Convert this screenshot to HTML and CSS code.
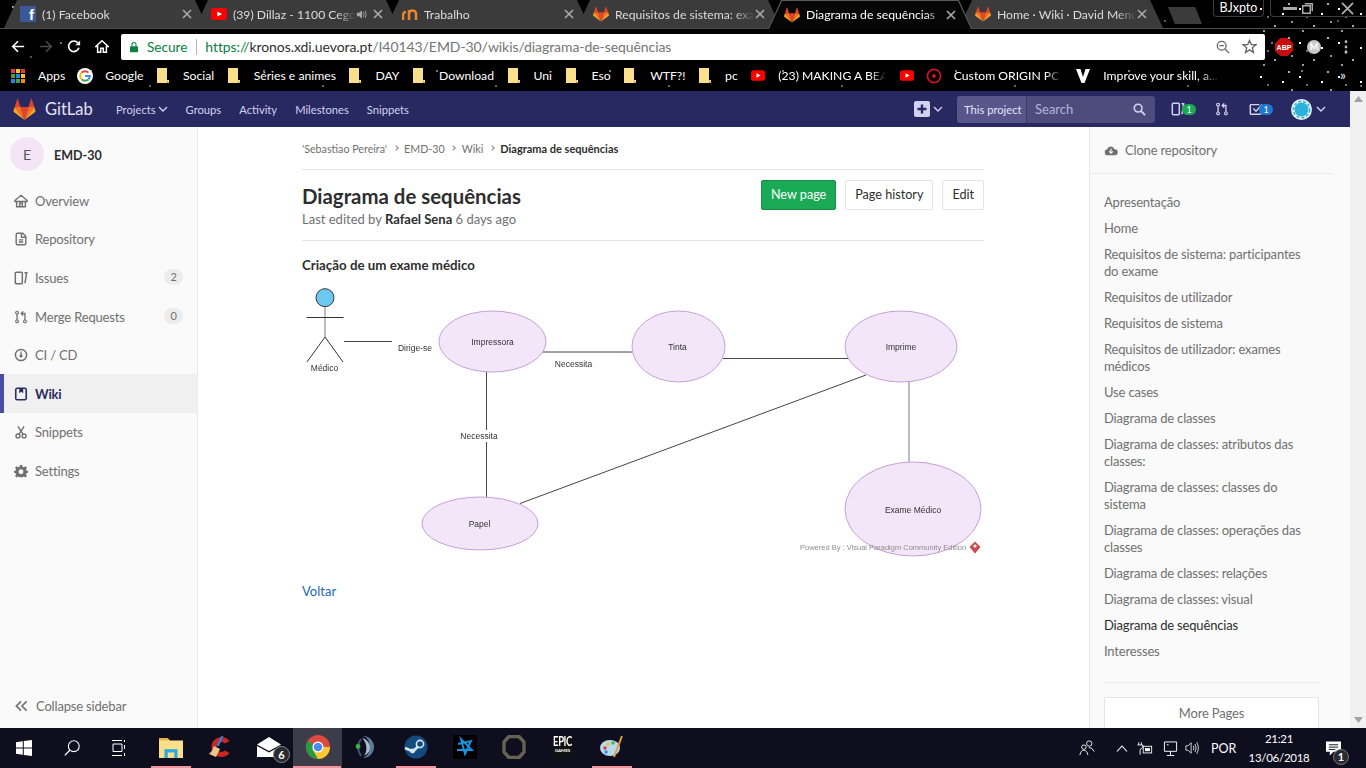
FILE: index.html
```html
<!DOCTYPE html>
<html lang="pt">
<head>
<meta charset="utf-8">
<title>Diagrama de sequências · Wiki</title>
<link rel="stylesheet" href="styles.css">
</head>
<body>
<svg class="sprites" aria-hidden="true">
  <symbol id="tanuki" viewBox="0 0 36 34">
    <path fill="#e24329" d="M18 34 24.6 13 H11.4Z"/>
    <path fill="#fc6d26" d="M18 34 11.4 13 H2.2Z"/>
    <path fill="#fca326" d="M2.2 13 .2 19.4c-.2.6 0 1.2.5 1.5L18 34Z"/>
    <path fill="#e24329" d="M2.2 13H11.4L7.4.6c-.2-.6-1-.6-1.2 0Z"/>
    <path fill="#fc6d26" d="M18 34 24.6 13H33.8Z"/>
    <path fill="#fca326" d="M33.8 13 35.8 19.4c.2.6 0 1.2-.5 1.5L18 34Z"/>
    <path fill="#e24329" d="M33.8 13H24.6L28.6.6c.2-.6 1-.6 1.2 0Z"/>
  </symbol>
  <symbol id="yt" viewBox="0 0 16 12">
    <rect width="16" height="12" rx="3" fill="#f00"/>
    <path d="M6.3 3.4 11 6 6.3 8.6Z" fill="#fff"/>
  </symbol>
  <symbol id="close" viewBox="0 0 10 10">
    <path d="M1 1 9 9M9 1 1 9" fill="none" stroke="#a8a8a8" stroke-width="1.7"/>
  </symbol>
  <symbol id="folder" viewBox="0 0 12 15">
    <path d="M0 0H10V12H12V15H0Z" fill="#fbe08c"/>
    <path d="M10 12V15H12Z" fill="#c7a949"/>
  </symbol>
  <symbol id="chev" viewBox="0 0 10 6">
    <path d="M1 1 5 5 9 1" fill="none" stroke="currentColor" stroke-width="1.4"/>
  </symbol>
  <symbol id="issues" viewBox="0 0 16 16">
    <path d="M2.5 1.5H8.5A1 1 0 0 1 9.5 2.5V13.5A1 1 0 0 1 8.5 14.5H2.5A1 1 0 0 1 1.5 13.5V2.5A1 1 0 0 1 2.5 1.5ZM12 2H14.5L12.5 14" fill="none" stroke="currentColor" stroke-width="1.7"/>
  </symbol>
  <symbol id="merge" viewBox="0 0 16 16">
    <circle cx="3.5" cy="3" r="1.6" fill="none" stroke="currentColor" stroke-width="1.3"/>
    <circle cx="3.5" cy="13" r="1.6" fill="none" stroke="currentColor" stroke-width="1.3"/>
    <circle cx="12.5" cy="13" r="1.6" fill="none" stroke="currentColor" stroke-width="1.3"/>
    <path d="M3.5 4.6V11.4M12.5 11.4V4H9M10.5 1.6 8.2 4 10.5 6.4" fill="none" stroke="currentColor" stroke-width="1.5"/>
  </symbol>
</svg>

<div class="app">
  <header class="chrome">
    <div class="tabstrip">
      <div class="tab">
        <span class="fb">f</span>
        <span class="tab-title">(1) Facebook</span>
        <svg class="tab-x"><use href="#close"/></svg>
      </div>
      <div class="tab">
        <svg class="fav"><use href="#yt"/></svg>
        <span class="tab-title">(39) Dillaz - 1100 Cegonhas</span>
        <svg class="speaker" viewBox="0 0 12 12"><path d="M1 4H3.5L6.5 1.5V10.5L3.5 8H1Z" fill="#aaa"/><path d="M8 3.5Q9.5 6 8 8.5M10 2Q12 6 10 10" fill="none" stroke="#aaa"/></svg>
        <svg class="tab-x"><use href="#close"/></svg>
      </div>
      <div class="tab">
        <svg class="fav" viewBox="0 0 16 16"><path d="M1 14V9A3 3 0 0 1 4 6" fill="none" stroke="#e8862a" stroke-width="2.6"/><path d="M7 14V4M7 8A3.5 3.5 0 0 1 14 8V14" fill="none" stroke="#e8862a" stroke-width="2.6"/></svg>
        <span class="tab-title">Trabalho</span>
        <svg class="tab-x"><use href="#close"/></svg>
      </div>
      <div class="tab">
        <svg class="fav"><use href="#tanuki"/></svg>
        <span class="tab-title">Requisitos de sistema: exames</span>
        <svg class="tab-x"><use href="#close"/></svg>
      </div>
      <div class="tab tab-active">
        <svg class="fav"><use href="#tanuki"/></svg>
        <span class="tab-title">Diagrama de sequências</span>
        <svg class="tab-x"><use href="#close"/></svg>
      </div>
      <div class="tab">
        <svg class="fav"><use href="#tanuki"/></svg>
        <span class="tab-title">Home · Wiki · David Mendes</span>
        <svg class="tab-x"><use href="#close"/></svg>
      </div>
      <div class="newtab"></div>
      <div class="winbox">
        <div class="profile">BJxpto</div>
        <div class="wincontrols">
          <svg class="wc-min" viewBox="0 0 14 3"><rect width="14" height="3" fill="#aaa"/></svg>
          <svg class="wc-max" viewBox="0 0 12 12"><path d="M3 .8H11.2V9M.8 3H9V11.2H.8Z" fill="none" stroke="#aaa" stroke-width="1.6"/></svg>
          <svg class="wc-x" viewBox="0 0 14 14"><path d="M1 1 13 13M13 1 1 13" fill="none" stroke="#aaa" stroke-width="2"/></svg>
        </div>
      </div>
    </div>

    <div class="toolbar">
      <svg class="tb-icon" viewBox="0 0 16 16"><path d="M15 8H2M8 2 2 8 8 14" fill="none" stroke="#fff" stroke-width="1.9"/></svg>
      <svg class="tb-icon" viewBox="0 0 16 16"><path d="M1 8H14M8 2 14 8 8 14" fill="none" stroke="#4a4a4a" stroke-width="1.9"/></svg>
      <svg class="tb-icon" viewBox="0 0 16 16"><path d="M13.6 9.5A6 6 0 1 1 12.4 3.8" fill="none" stroke="#fff" stroke-width="1.9"/><path d="M9.5 6.5H15V1Z" fill="#fff"/></svg>
      <svg class="tb-icon" viewBox="0 0 16 16"><path d="M8 1.5 15 8H13V14.5H9.5V10H6.5V14.5H3V8H1Z" fill="none" stroke="#fff" stroke-width="1.7"/></svg>
      <div class="omnibox">
        <svg class="lock" viewBox="0 0 10 13"><path d="M2.5 6V3.5A2.5 2.5 0 0 1 7.5 3.5V6" fill="none" stroke="#0b8043" stroke-width="1.3"/><rect y="5.5" width="10" height="7.5" rx="1" fill="#0b8043"/></svg>
        <span class="secure">Secure</span>
        <span class="omni-sep"></span>
        <span class="url"><span class="url-scheme">https://</span><span class="url-host">kronos.xdi.uevora.pt</span>/I40143/EMD-30/wikis/diagrama-de-sequências</span>
        <svg class="omni-zoom" viewBox="0 0 16 16"><circle cx="6.5" cy="6.5" r="5" fill="none" stroke="#666" stroke-width="1.5"/><path d="M10.3 10.3 15 15M4 6.5H9" fill="none" stroke="#666" stroke-width="1.5"/></svg>
        <svg class="omni-star" viewBox="0 0 16 16"><path d="M8 1.5 9.9 6H14.9L11 9.2 12.3 14.4 8 11.6 3.7 14.4 5 9.2 1.1 6H6.1Z" fill="none" stroke="#666" stroke-width="1.4"/></svg>
      </div>
      <svg class="ext-abp" viewBox="0 0 18 18"><path d="M5.3 0H12.7L18 5.3V12.7L12.7 18H5.3L0 12.7V5.3Z" fill="#c70d0d"/><text x="9" y="12" text-anchor="middle" class="abp-text">ABP</text></svg>
      <span class="ext-m">M</span>
      <svg class="menu-dots" viewBox="0 0 4 16"><circle cx="2" cy="2" r="1.6" fill="#bbb"/><circle cx="2" cy="8" r="1.6" fill="#bbb"/><circle cx="2" cy="14" r="1.6" fill="#bbb"/></svg>
    </div>

    <nav class="bookmarks">
      <a class="bm bm-first"><svg class="bm-apps" viewBox="0 0 14 14"><rect width="4" height="4" fill="#e53935"/><rect x="5" width="4" height="4" fill="#fbc02d"/><rect x="10" width="4" height="4" fill="#e53935"/><rect y="5" width="4" height="4" fill="#43a047"/><rect x="5" y="5" width="4" height="4" fill="#1e88e5"/><rect x="10" y="5" width="4" height="4" fill="#fbc02d"/><rect y="10" width="4" height="4" fill="#1e88e5"/><rect x="5" y="10" width="4" height="4" fill="#43a047"/><rect x="10" y="10" width="4" height="4" fill="#fb8c00"/></svg>Apps</a>
      <a class="bm"><svg class="bm-g" viewBox="0 0 16 16"><circle cx="8" cy="8" r="8" fill="#fff"/><path d="M8 3.2A4.8 4.8 0 0 1 11.4 4.6" fill="none" stroke="#ea4335" stroke-width="2"/><path d="M4.6 4.6A4.8 4.8 0 0 1 8 3.2" fill="none" stroke="#ea4335" stroke-width="2"/><path d="M4.6 4.6A4.8 4.8 0 0 0 4.6 11.4" fill="none" stroke="#fbbc05" stroke-width="2"/><path d="M4.6 11.4A4.8 4.8 0 0 0 11.4 11.4" fill="none" stroke="#34a853" stroke-width="2"/><path d="M11.4 11.4A4.8 4.8 0 0 0 12.8 8H8" fill="none" stroke="#4285f4" stroke-width="2"/></svg>Google</a>
      <a class="bm"><svg class="bm-f"><use href="#folder"/></svg>Social</a>
      <a class="bm"><svg class="bm-f"><use href="#folder"/></svg>Séries e animes</a>
      <a class="bm"><svg class="bm-f"><use href="#folder"/></svg>DAY</a>
      <a class="bm"><svg class="bm-f"><use href="#folder"/></svg>Download</a>
      <a class="bm"><svg class="bm-f"><use href="#folder"/></svg>Uni</a>
      <a class="bm"><svg class="bm-f"><use href="#folder"/></svg>Eso</a>
      <a class="bm"><svg class="bm-f"><use href="#folder"/></svg>WTF?!</a>
      <a class="bm"><svg class="bm-f"><use href="#folder"/></svg>pc</a>
      <a class="bm"><svg class="bm-y"><use href="#yt"/></svg><span class="bm-cut">(23) MAKING A BEAT</span></a>
      <a class="bm bm-tight"><svg class="bm-y"><use href="#yt"/></svg></a>
      <a class="bm"><svg class="bm-g" viewBox="0 0 16 16"><circle cx="8" cy="8" r="6.6" fill="none" stroke="#c8161d" stroke-width="1.8"/><circle cx="8" cy="8" r="2" fill="#c8161d"/></svg><span class="bm-cut">Custom ORIGIN PC E</span></a>
      <a class="bm"><svg class="bm-g" viewBox="0 0 16 16"><path d="M1 1H5.5L8 9 10.5 1H15L9.5 15H6.5Z" fill="#fff"/></svg><span class="bm-cut bm-improve">Improve your skill, a...</span></a>
      <span class="bm-more">»</span>
    </nav>
  </header>

  <div class="viewport">
    <div class="page">
      <div class="navbar">
        <div class="brand"><svg class="brand-logo"><use href="#tanuki"/></svg><span>GitLab</span></div>
        <ul class="navlinks">
          <li>Projects <svg class="chev"><use href="#chev"/></svg></li>
          <li>Groups</li>
          <li>Activity</li>
          <li>Milestones</li>
          <li>Snippets</li>
        </ul>
        <div class="nav-right">
          <div class="plus">
            <svg class="plus-box" viewBox="0 0 16 16"><rect width="16" height="16" rx="2" fill="#d1d1f0"/><path d="M8 3.5V12.5M3.5 8H12.5" stroke="#292961" stroke-width="2.4"/></svg>
            <svg class="chev"><use href="#chev"/></svg>
          </div>
          <div class="search">
            <span class="search-scope">This project</span>
            <span class="search-box">Search
              <svg class="search-ico" viewBox="0 0 14 14"><circle cx="5.5" cy="5.5" r="4.2" fill="none" stroke="#d1d1f0" stroke-width="1.7"/><path d="M8.8 8.8 13 13" stroke="#d1d1f0" stroke-width="2"/></svg>
            </span>
          </div>
          <div class="nav-ico nav-issues"><svg class="nav-svg"><use href="#issues"/></svg><span class="nav-badge nav-green">1</span></div>
          <div class="nav-ico nav-merge"><svg class="nav-svg"><use href="#merge"/></svg></div>
          <div class="nav-ico nav-todo">
            <svg class="nav-svg" viewBox="0 0 16 16"><path d="M12 3H2.5A1 1 0 0 0 1.5 4V13A1 1 0 0 0 2.5 14H12.5A1 1 0 0 0 13.5 13V9M5 7.5 8 10.5 15 3" fill="none" stroke="currentColor" stroke-width="1.7"/></svg>
            <span class="nav-badge nav-blue">1</span>
          </div>
          <div class="nav-avatar">
            <svg class="avatar-svg" viewBox="0 0 21 21"><circle cx="10.5" cy="10.5" r="10.5" fill="#e4f3f8"/><circle cx="10.5" cy="10.5" r="7" fill="#2cb1d9"/><circle cx="10.5" cy="10.5" r="8.200" fill="none" stroke="#2cb1d9" stroke-width="1.400" stroke-dasharray="3 2"/></svg>
            <svg class="chev"><use href="#chev"/></svg>
          </div>
        </div>
      </div>

      <div class="body">
        <aside class="sidebar">
          <div class="project">
            <span class="project-avatar">E</span>
            <span class="project-name">EMD-30</span>
          </div>
          <ul class="side-nav">
            <li class="side-item"><svg class="side-ico" viewBox="0 0 16 16"><path d="M8 1.5 15 7.5V8.5H13V14.5H3V8.5H1V7.5ZM3.5 8.5H12.5M6.5 14V10.5H9.5V14" fill="none" stroke="currentColor" stroke-width="1.6"/></svg>Overview</li>
            <li class="side-item"><svg class="side-ico" viewBox="0 0 16 16"><path d="M4 1.5H10L13.5 5V13A1.5 1.5 0 0 1 12 14.5H4A1.5 1.5 0 0 1 2.5 13V3A1.5 1.5 0 0 1 4 1.5ZM8.5 2V6H13M5.5 9H10.5M5.5 11.5H10.5" fill="none" stroke="currentColor" stroke-width="1.6"/></svg>Repository</li>
            <li class="side-item"><svg class="side-ico"><use href="#issues"/></svg>Issues<span class="side-badge">2</span></li>
            <li class="side-item"><svg class="side-ico"><use href="#merge"/></svg>Merge Requests<span class="side-badge">0</span></li>
            <li class="side-item"><svg class="side-ico" viewBox="0 0 16 16"><circle cx="8" cy="8" r="6.4" fill="none" stroke="currentColor" stroke-width="1.7"/><circle cx="8" cy="9" r="1.8" fill="currentColor"/><path d="M8 4V8" stroke="currentColor" stroke-width="1.4"/></svg>CI / CD</li>
            <li class="side-item side-active"><svg class="side-ico" viewBox="0 0 16 16"><path d="M3.5 1.5H12.5A1.5 1.5 0 0 1 14 3V13A1.5 1.5 0 0 1 12.5 14.5H3.5A1.5 1.5 0 0 1 2 13V3A1.5 1.5 0 0 1 3.5 1.5Z" fill="none" stroke="currentColor" stroke-width="1.8"/><path d="M6 2H10.5V7L8.2 5.5 6 7Z" fill="currentColor"/></svg>Wiki</li>
            <li class="side-item"><svg class="side-ico" viewBox="0 0 16 16"><circle cx="4.5" cy="12.5" r="2.2" fill="none" stroke="currentColor" stroke-width="1.6"/><circle cx="11.5" cy="12.5" r="2.2" fill="none" stroke="currentColor" stroke-width="1.6"/><path d="M10.4 10.6 4.5 1.5M5.6 10.6 11.5 1.5" fill="none" stroke="currentColor" stroke-width="1.6"/></svg>Snippets</li>
            <li class="side-item"><svg class="side-ico" viewBox="0 0 16 16"><path d="M6.7 1H9.3L9.7 3 11.3 3.7 13 2.6 14.8 4.4 13.7 6.1 14.4 7.7 16 8V10L14.4 10.3 13.7 11.9 14.8 13.6 13 15.4 11.3 14.3 9.7 15H6.3L4.7 14.3 3 15.4 1.2 13.6 2.3 11.9 1.6 10.3 0 10V8L1.6 7.7 2.3 6.1 1.2 4.4 3 2.6 4.7 3.7 6.3 3ZM8 6A2.6 2.6 0 1 0 8 11.6 2.6 2.6 0 1 0 8 6Z" fill="currentColor" fill-rule="evenodd"/></svg>Settings</li>
          </ul>
          <div class="collapse">
            <svg class="collapse-ico" viewBox="0 0 14 12"><path d="M6.5 1 1.5 6 6.5 11M12.5 1 7.5 6 12.5 11" fill="none" stroke="currentColor" stroke-width="1.8"/></svg>
            Collapse sidebar
          </div>
        </aside>

        <main class="content">
          <div class="container">
            <ol class="crumbs">
              <li>'Sebastiao Pereira'</li>
              <li class="crumb-sep"></li>
              <li>EMD-30</li>
              <li class="crumb-sep"></li>
              <li>Wiki</li>
              <li class="crumb-sep"></li>
              <li class="crumb-last">Diagrama de sequências</li>
            </ol>
            <div class="page-head">
              <div>
                <h1 class="page-title">Diagrama de sequências</h1>
                <p class="page-meta">Last edited by <strong>Rafael Sena</strong> 6 days ago</p>
              </div>
              <div class="page-actions">
                <a class="btn btn-new">New page</a>
                <a class="btn">Page history</a>
                <a class="btn">Edit</a>
              </div>
            </div>
            <h2 class="wiki-heading">Criação de um exame médico</h2>
            <svg class="diagram" viewBox="302 285 682 276">
              <g class="d-line">
                <path d="M344 341.5H392"/>
                <path d="M543 352H632"/>
                <path d="M486.5 372V430M486.5 442V497"/>
                <path d="M520 503.5 866 375"/>
                <path d="M723 358.5H848"/>
              </g>
              <path class="d-line-grey" d="M909 382V462"/>
              <ellipse class="d-oval" cx="492.5" cy="341.5" rx="53.5" ry="30.5"/>
              <ellipse class="d-oval" cx="678.5" cy="346.5" rx="46.5" ry="35.5"/>
              <ellipse class="d-oval" cx="901" cy="346.5" rx="56" ry="35.5"/>
              <ellipse class="d-oval" cx="913" cy="509" rx="68" ry="47"/>
              <ellipse class="d-oval" cx="480" cy="523.5" rx="58" ry="26.5"/>
              <circle class="d-head" cx="325" cy="297.7" r="9"/>
              <path class="d-line-grey" d="M325 307V337"/>
              <path class="d-actor" d="M306.5 317.5H343.5M325 337 307 362M325 337 343 362"/>
              <text class="d-text" x="324.5" y="371" text-anchor="middle">Médico</text>
              <text class="d-text" x="415" y="351" text-anchor="middle">Dirige-se</text>
              <text class="d-text" x="492.5" y="344.5" text-anchor="middle">Impressora</text>
              <text class="d-text" x="573.5" y="367" text-anchor="middle">Necessita</text>
              <text class="d-text" x="479" y="439" text-anchor="middle">Necessita</text>
              <text class="d-text" x="677.5" y="349.5" text-anchor="middle">Tinta</text>
              <text class="d-text" x="901" y="349.5" text-anchor="middle">Imprime</text>
              <text class="d-text" x="913" y="512.5" text-anchor="middle">Exame Médico</text>
              <text class="d-text" x="479.5" y="527" text-anchor="middle">Papel</text>
              <text class="d-powered" x="800" y="550">Powered By : Visual Paradigm Community Edition</text>
              <path class="d-logo" d="M975 541.5 980.5 547 975 553.5 969.500 547Z"/>
              <circle class="d-logo-dot" cx="975" cy="546" r="1.600"/>
            </svg>
            <a class="back-link">Voltar</a>
          </div>
        </main>

        <aside class="wiki-side">
          <div class="clone">
            <svg class="clone-ico" viewBox="0 0 16 12"><path d="M4 11.500A3.500 3.500 0 0 1 3.500 4.600 4.500 4.500 0 0 1 12 4.500 3.500 3.500 0 0 1 12.500 11.500Z" fill="#707070"/><path d="M8 4V9M5.800 7 8 9.200 10.200 7" fill="none" stroke="#fafafa" stroke-width="1.300"/></svg>
            Clone repository
          </div>
          <ul class="wiki-pages">
            <li>Apresentação</li>
            <li>Home</li>
            <li>Requisitos de sistema: participantes do exame</li>
            <li>Requisitos de utilizador</li>
            <li>Requisitos de sistema</li>
            <li>Requisitos de utilizador: exames médicos</li>
            <li>Use cases</li>
            <li>Diagrama de classes</li>
            <li>Diagrama de classes: atributos das classes:</li>
            <li>Diagrama de classes: classes do sistema</li>
            <li>Diagrama de classes: operações das classes</li>
            <li>Diagrama de classes: relações</li>
            <li>Diagrama de classes: visual</li>
            <li class="wiki-current">Diagrama de sequências</li>
            <li>Interesses</li>
          </ul>
          <div class="more-pages"><a class="more-btn">More Pages</a></div>
        </aside>
      </div>
    </div>
    <div class="scrollbar">
      <svg class="sb-arrow" viewBox="0 0 9 6"><path d="M4.500 0 9 6H0Z" fill="#a3a3a3"/></svg>
      <svg class="sb-arrow" viewBox="0 0 9 6"><path d="M4.500 6 9 0H0Z" fill="#a3a3a3"/></svg>
    </div>
  </div>

  <footer class="taskbar">
    <div class="tk-sys">
      <svg class="tk-win" viewBox="0 0 16 16"><path d="M0 2.300 6.800 1.300V7.500H0ZM7.800 1.100 16 0V7.500H7.800ZM0 8.500H6.800V14.700L0 13.700ZM7.800 8.500H16V16L7.800 14.900Z" fill="#fff"/></svg>
    </div>
    <div class="tk-sys">
      <svg class="tk-ico" viewBox="0 0 16 16"><circle cx="9.800" cy="6.200" r="5.400" fill="none" stroke="#fff" stroke-width="1.100"/><path d="M6 10 .8 15.400" stroke="#fff" stroke-width="1.300"/></svg>
    </div>
    <div class="tk-sys">
      <svg class="tk-ico" viewBox="0 0 16 16"><path d="M0 .5H10M0 15.500H10M1 4H10V11.500H1ZM12.500 0V2M12.500 5V9M12.500 13V16" fill="none" stroke="#fff"/></svg>
    </div>
    <div class="tk-app tk-open tk-first">
      <svg class="tk-app-ico" viewBox="0 0 22 20"><path d="M0 2H8L10 4H22V20H0Z" fill="#fbdf8a"/><path d="M0 2H8L10 4H0Z" fill="#e8b93e"/><rect x="5" y="12" width="12" height="8" fill="#2da9df"/><path d="M8 20V15H14V20Z" fill="#fbdf8a"/></svg>
    </div>
    <div class="tk-app">
      <svg class="tk-app-ico" viewBox="0 0 24 24"><path d="M21.500 6A10 10 0 1 0 21.500 18L17 15.500A5 5 0 1 1 17 8.500Z" fill="#c9281e"/><path d="M14.500 1 9.500 11" stroke="#2f7fd0" stroke-width="2.400"/><path d="M6 11 12 14 8 22 1 19Q4.500 16 6 11Z" fill="#e8c48a"/></svg>
    </div>
    <div class="tk-app tk-mail">
      <svg class="tk-app-ico" viewBox="0 0 24 20"><path d="M0 7.500 12 0 24 7.500 12 14Z" fill="#fff"/><path d="M0 9 12 15.500 24 9V20H0Z" fill="#fff"/></svg>
      <span class="mail-badge">6</span>
    </div>
    <div class="tk-app tk-current">
      <svg class="tk-app-ico tk-chrome" viewBox="0 0 24 24"><circle cx="12" cy="12" r="12" fill="#dd4b3e"/><path d="M12 12 1.600 6A12 12 0 0 0 12 24L18 13.600Z" fill="#279a43"/><path d="M12 12H24A12 12 0 0 1 12 24L6 13.600Z" fill="#fcc934"/><circle cx="12" cy="12" r="5.500" fill="#fff"/><circle cx="12" cy="12" r="4.300" fill="#4c8bf5"/></svg>
    </div>
    <div class="tk-app">
      <svg class="tk-app-ico" viewBox="0 0 24 24"><path d="M8 1A11 11 0 0 1 8 23 9 9 0 0 0 14 12 9 9 0 0 0 8 1Z" fill="#5b7c99"/><path d="M7 3A10 10 0 0 1 15 12 10 10 0 0 1 9 21 14 14 0 0 0 7 3Z" fill="#a9bccd"/><path d="M6 4Q0 12 6 21" fill="none" stroke="#3d566d" stroke-width="2"/><circle cx="3" cy="11.500" r="2.400" fill="#3fae49"/></svg>
    </div>
    <div class="tk-app tk-open">
      <svg class="tk-app-ico" viewBox="0 0 24 24"><circle cx="12" cy="12" r="11.500" fill="#134a7d"/><circle cx="16" cy="9" r="3.600" fill="none" stroke="#d6e6f2" stroke-width="1.600"/><path d="M1 13 9 16.500 14 11.500" fill="none" stroke="#d6e6f2" stroke-width="2.600"/><circle cx="8.500" cy="16" r="2.400" fill="#d6e6f2"/></svg>
    </div>
    <div class="tk-app">
      <svg class="tk-app-ico" viewBox="0 0 24 24"><rect width="24" height="24" rx="1.500" fill="#000"/><path d="M5 9 18 6 12 19 8 4 19 15 4 15" fill="none" stroke="#1596e2" stroke-width="1.800"/></svg>
    </div>
    <div class="tk-app">
      <svg class="tk-app-ico" viewBox="0 0 24 24"><path d="M7 1.500H17L22 7V17L17 22.500H7L2 17V7Z" fill="none" stroke="#686250" stroke-width="3.400" stroke-linejoin="round"/></svg>
    </div>
    <div class="tk-app">
      <div class="epic"><span>EPIC</span><small>GAMES</small></div>
    </div>
    <div class="tk-app tk-open">
      <svg class="tk-app-ico" viewBox="0 0 24 24"><ellipse cx="10" cy="13" rx="10" ry="8" fill="#b9d9ee"/><circle cx="5" cy="13" r="1.800" fill="#e0433b"/><circle cx="8" cy="9" r="1.800" fill="#f2c230"/><circle cx="13" cy="8" r="1.800" fill="#54b04a"/><circle cx="6" cy="17" r="1.800" fill="#3f8fd6"/><path d="M22 1 14 22" stroke="#e59b3c" stroke-width="2"/></svg>
    </div>
    <div class="tray">
      <svg class="tr-people" viewBox="0 0 18 18"><circle cx="11.500" cy="4" r="3" fill="none" stroke="#fff"/><circle cx="5.500" cy="8" r="2.500" fill="none" stroke="#fff"/><path d="M1 17Q2 11.500 5.500 11.500T10 17M11 8.500Q15 8 17 13" fill="none" stroke="#fff"/></svg>
      <svg class="tr-caret" viewBox="0 0 12 7"><path d="M1 6.500 6 1 11 6.500" fill="none" stroke="#fff" stroke-width="1.100"/></svg>
      <svg class="tr-power" viewBox="0 0 18 14"><path d="M2 0V3M5 0V3M.5 3H6.500V6L3.500 8V14" fill="none" stroke="#fff"/><rect x="7" y="4.500" width="9.500" height="7.500" fill="none" stroke="#fff"/><rect x="9" y="6.500" width="5.500" height="3.500" fill="#fff"/></svg>
      <svg class="tr-net" viewBox="0 0 16 16"><path d="M1.500 1H14.500V11H1.500ZM8 11V15M4 15.500H12M4 4H6" fill="none" stroke="#fff"/></svg>
      <svg class="tr-vol" viewBox="0 0 16 16"><path d="M1 5.500H3.500L7 2V14L3.500 10.500H1ZM9.500 5.500Q11 8 9.500 10.500M11.500 3.500Q14 8 11.500 12.500M13.500 1.500Q17 8 13.500 14.500" fill="none" stroke="#fff" stroke-width=".9"/></svg>
      <span class="tr-lang">POR</span>
      <div class="tr-clock"><span>21:21</span><span>13/06/2018</span></div>
      <div class="tr-note">
        <svg class="tr-note-ico" viewBox="0 0 16 15"><path d="M0 0H16V11H8L4 15V11H0Z" fill="#fff"/><path d="M3 3.500H13M3 6H13M3 8.500H10" stroke="#101020"/></svg>
        <span class="note-badge">1</span>
      </div>
    </div>
  </footer>
</div>
</body>
</html>
```

FILE: styles.css
```css
* { box-sizing: border-box; }
html, body { margin: 0; height: 100%; overflow: hidden; }
body { font-family: Lato, "Open Sans", "Liberation Sans", sans-serif; font-size: 13px; color: #2e2e2e; background: #fff; }
ul, ol { list-style: none; margin: 0; padding: 0; }
h1, h2, p { margin: 0; }
svg { display: block; flex: none; }
.sprites { position: absolute; width: 0; height: 0; }
.app { display: flex; flex-direction: column; width: 1366px; height: 768px; overflow: hidden; }

/* browser chrome */
.chrome {
  position: relative; flex: none; height: 91px; background-color: #000; color: #fff;
  font-size: 12px;
  background-image:
    radial-gradient(circle at 13px 7px, #fff .5px, transparent 1.1px),
    radial-gradient(circle at 61px 43px, #aac .5px, transparent 1.1px),
    radial-gradient(circle at 127px 21px, #889 .5px, transparent 1.1px),
    radial-gradient(circle at 91px 71px, #fff .4px, transparent 1px),
    radial-gradient(circle at 31px 57px, #779 .5px, transparent 1.1px),
    radial-gradient(circle at 150px 86px, #ccd .4px, transparent 1px);
  background-size: 173px 91px;
}
.chrome::before {
  content: ""; position: absolute; top: 0; right: 0; bottom: 0; width: 110px;
  background-image:
    radial-gradient(circle at 5px 9px, #fff .7px, transparent 1.2px),
    radial-gradient(circle at 19px 26px, #fff .5px, transparent 1.1px),
    radial-gradient(circle at 33px 4px, #ddd .6px, transparent 1.1px),
    radial-gradient(circle at 12px 17px, #bbb .5px, transparent 1px),
    radial-gradient(circle at 27px 14px, #fff .7px, transparent 1.2px),
    radial-gradient(circle at 8px 31px, #eee .5px, transparent 1.1px),
    radial-gradient(circle at 36px 22px, #fff .5px, transparent 1px);
  background-size: 39px 34px;
}
.tabstrip { position: relative; display: flex; height: 29px; padding-left: 4px; border-bottom: 1px solid #4b4b4b; }
.tab {
  position: relative; display: flex; align-items: center; width: 205px; height: 28px; margin-right: -14px; padding: 0 16px;
  background: #3b3b3b; color: #dcdcdc; font-size: 12.2px;
  clip-path: polygon(0 100%, 13px 0, 191px 0, 204px 100%);
}
.tab-active { background: #5a5a5a; color: #fff; height: 29px; z-index: 1; }
.tab-active::before {
  content: ""; position: absolute; inset: 1px 0 0 0; background: #060606;
  clip-path: polygon(1px 100%, 14px 0, 190px 0, 203px 100%);
}
.tab > * { position: relative; }
.fav { width: 16px; height: 16px; }
.fb { display: block; width: 16px; height: 16px; flex: none; background: #3b5998; color: #fff; font: 700 15px/17px "Liberation Sans", sans-serif; text-align: right; padding-right: 2px; }
.tab-title { flex: 1; margin-left: 6px; overflow: hidden; white-space: nowrap; -webkit-mask-image: linear-gradient(90deg, #000 85%, transparent); mask-image: linear-gradient(90deg, #000 85%, transparent); }
.tab-x { width: 10px; height: 10px; margin-right: 1px; }
.speaker { width: 11px; height: 11px; margin-right: 6px; }
.newtab { position: relative; width: 34px; height: 17px; margin: 7px 0 0 18px; background: #3b3b3b; clip-path: polygon(0 0, 80% 0, 100% 100%, 20% 100%); }
.winbox { position: absolute; top: 0; right: 0; display: flex; gap: 6px; height: 17px; }
.profile { width: 51px; text-align: center; border: 1px solid #3c3c3c; border-top: 0; border-radius: 0 0 4px 4px; line-height: 16px; font-size: 12.500px; }
.wincontrols { display: flex; align-items: center; width: 96px; padding: 0 0 0 12px; border: 1px solid #3c3c3c; border-top: 0; border-right: 0; border-radius: 0 0 0 4px; }
.wc-min { width: 14px; height: 3px; }
.wc-max { width: 11px; height: 11px; margin-left: 5px; }
.wc-x { width: 13px; height: 13px; margin-left: 28px; }

.toolbar { position: relative; display: flex; align-items: center; height: 32px; padding: 3px 0 0 11px; }
.tb-icon { width: 14px; height: 15px; margin-right: 14px; }
.omnibox { display: flex; align-items: center; width: 1144px; height: 26px; margin-left: -2px; padding: 0 8px 0 9px; background: #fff; border-radius: 2px; color: #757575; font-size: 14px; letter-spacing: -.07px; }
.lock { width: 8px; height: 12px; }
.secure { margin-left: 9px; color: #0b8043; font-size: 13.700px; }
.omni-sep { width: 1px; height: 16px; margin: 0 8px 0 9px; background: #b5b5b5; }
.url { flex: 1; white-space: nowrap; }
.url-scheme { color: #0b8043; }
.url-host { color: #303030; }
.omni-zoom { width: 14px; height: 14px; margin-right: 12px; }
.omni-star { width: 15px; height: 15px; }
.ext-abp { width: 18px; height: 18px; margin-left: 10px; }
.abp-text { font: 700 7px "Liberation Sans", sans-serif; fill: #fff; letter-spacing: 0; }
.ext-m { display: flex; align-items: center; justify-content: center; width: 14px; height: 14px; margin-left: 14px; border-radius: 50%; background: #c8c8c8; color: #fff; font-size: 9px; font-weight: 700; }
.menu-dots { width: 4px; height: 14px; margin-left: 23px; }

.bookmarks { position: relative; display: flex; align-items: center; height: 29px; padding-left: 11px; white-space: nowrap; font-size: 12.200px; }
.bm { display: flex; align-items: center; gap: 14px; margin-right: 13.500px; }
.bm-first { gap: 13px; margin-right: 12px; }
.bm-tight { margin-right: 13px; }
.bm-apps { width: 14px; height: 14px; }
.bm-g { width: 16px; height: 16px; margin-right: -2px; }
.bm-f { width: 12px; height: 15px; }
.bm-y { width: 14px; height: 11px; margin-right: -1px; }
.bm-cut { display: block; width: 108px; overflow: hidden; -webkit-mask-image: linear-gradient(90deg, #000 85%, transparent); mask-image: linear-gradient(90deg, #000 85%, transparent); }
.bm-improve { width: 116px; }
.bm-more { position: absolute; right: 20px; top: 6px; font-size: 13px; font-weight: 700; color: #ccc; }

/* page */
.viewport { display: flex; flex: 1; min-height: 0; }
.page { display: flex; flex-direction: column; flex: 1; min-width: 0; }
.navbar { display: flex; align-items: center; flex: none; height: 36px; padding-left: 13px; background: #292961; color: #d1d1f0; font-size: 11.200px; }
.brand { display: flex; align-items: center; gap: 9px; width: 103px; color: #e3e3f5; font-size: 16.500px; }
.brand-logo { width: 23px; height: 21px; }
.navlinks { display: flex; gap: 18px; }
.navlinks li { display: flex; align-items: center; gap: 2px; }
.chev { width: 10px; height: 6px; color: #d1d1f0; }
.nav-right { display: flex; align-items: center; margin-left: auto; }
.plus { display: flex; align-items: center; gap: 3px; margin-right: 14px; }
.plus-box { width: 16px; height: 16px; }
.search { display: flex; width: 198px; height: 27px; margin-right: 16px; border-radius: 3px; overflow: hidden; background: #4c4c7d; }
.search-scope { display: flex; align-items: center; width: 70px; padding-left: 7px; background: #56568a; border-right: 1px solid #3b3b70; color: #e4e4f6; font-size: 11.200px; white-space: nowrap; }
.search-box { display: flex; align-items: center; justify-content: space-between; flex: 1; padding: 0 9px 0 8px; color: #b4b4d8; font-size: 13px; }
.search-ico { width: 13px; height: 13px; }
.nav-ico { position: relative; display: flex; align-items: center; height: 20px; }
.nav-issues { width: 25px; margin-right: 19px; }
.nav-merge { width: 13px; margin-right: 21px; }
.nav-todo { width: 24px; margin-right: 18px; }
.nav-svg { width: 14px; height: 16px; color: #d1d1f0; }
.nav-badge { position: absolute; right: 0; top: 5px; display: block; width: 14px; height: 11px; border-radius: 6px; color: #fff; font-size: 9px; line-height: 11px; text-align: center; }
.nav-green { background: #1aaa55; }
.nav-blue { background: #1f78d1; }
.nav-avatar { display: flex; align-items: center; gap: 4px; margin-right: 24px; }
.avatar-svg { width: 21px; height: 21px; }

.body { display: flex; flex: 1; min-height: 0; }
.sidebar { display: flex; flex-direction: column; flex: none; width: 198px; background: #fafafa; border-right: 1px solid #e9e9e9; color: #707070; letter-spacing: -.17px; }
.project { display: flex; align-items: center; gap: 10px; height: 34px; margin: 10px 0; padding-left: 10px; }
.project-avatar { display: flex; align-items: center; justify-content: center; width: 34px; height: 34px; border-radius: 50%; background: #f3e5f5; color: #555; font-size: 14px; }
.project-name { padding-top: 3px; color: #2e2e2e; font-size: 12.500px; font-weight: 700; letter-spacing: 0; }
.side-item { position: relative; display: flex; align-items: center; height: 38.600px; padding: 1px 14px 0 14px; }
.side-ico { width: 14px; height: 14px; margin-right: 7px; }
.side-badge { margin-left: auto; width: 19px; height: 16px; margin-top: -2px; border-radius: 8px; background: #ececec; color: #707070; font-size: 11px; line-height: 16px; text-align: center; }
.side-active { background: #f0f0f0; color: #292961; font-weight: 700; box-shadow: inset 4px 0 0 #4b4ba3; }
.collapse { display: flex; align-items: center; gap: 8px; margin-top: auto; height: 44px; padding-left: 15px; }
.collapse-ico { width: 13px; height: 12px; }

.content { flex: 1; min-width: 0; padding-right: 1px; background: #fff; }
.container { width: 682px; margin: 0 auto; }
.crumbs { display: flex; align-items: center; gap: 7.500px; height: 43px; border-bottom: 1px solid #e5e5e5; color: #707070; font-size: 10.700px; }
.crumb-sep { width: 4px; height: 4px; margin: 0 -1px; border-top: 1px solid #8a8a8a; border-right: 1px solid #8a8a8a; transform: rotate(45deg); }
.crumb-last { color: #2e2e2e; font-size: 11px; font-weight: 700; }
.page-head { display: flex; justify-content: space-between; height: 71px; padding-top: 10px; border-bottom: 1px solid #e5e5e5; }
.page-title { margin-top: 3px; color: #2e2e2e; font-size: 20.400px; font-weight: 700; line-height: 26px; }
.page-meta { margin-top: 1px; color: #707070; font-size: 13px; line-height: 18px; }
.page-meta strong { color: #2e2e2e; font-weight: 700; }
.page-actions { display: flex; gap: 9px; align-items: flex-start; }
.btn { display: block; height: 30px; padding: 0 9px; border: 1px solid #e5e5e5; border-radius: 2px; background: #fff; color: #2e2e2e; font-size: 12.600px; line-height: 28px; }
.btn-new { background: #1aaa55; border-color: #168f48; color: #fff; }
.wiki-heading { margin-top: 15px; color: #2e2e2e; font-size: 13.300px; font-weight: 700; line-height: 18px; }
.diagram { width: 682px; height: 276px; margin-top: 11px; filter: blur(.3px); }
.d-line path { fill: none; stroke: #444; stroke-width: 1; }
.d-line-grey { fill: none; stroke: #9a9a9a; stroke-width: 1.300; }
.d-oval { fill: #f3e6f8; stroke: #c59fd9; stroke-width: 1; }
.d-head { fill: #6cc8f0; stroke: #333; stroke-width: 1; }
.d-actor { fill: none; stroke: #333; stroke-width: 1; }
.d-text { font: 8.500px "Liberation Sans", Arial, sans-serif; fill: #333; }
.d-powered { font: 7.500px "Liberation Sans", Arial, sans-serif; fill: #8e8e8e; }
.d-logo { fill: #c94a4a; }
.d-logo-dot { fill: #fff; }
.back-link { display: block; margin-top: 21px; color: #1b69b6; font-size: 13px; line-height: 18px; }

.wiki-side { flex: none; width: 261px; background: #fafafa; border-left: 1px solid #e9e9e9; color: #707070; font-size: 13px; letter-spacing: -.17px; line-height: 17px; }
.clone { display: flex; align-items: center; gap: 7px; width: 243px; height: 47px; padding: 0 0 0 14px; border-bottom: 1px solid #e9e9e9; }
.clone-ico { width: 14px; height: 11px; }
.wiki-pages { display: flex; flex-direction: column; gap: 9px; width: 208px; padding: 20px 0 0 14px; box-sizing: content-box; }
.wiki-current { color: #2e2e2e; }
.more-pages { margin: 22px 0 0 14px; width: 215px; padding-top: 14px; border-top: 1px solid #e9e9e9; }
.more-btn { display: block; height: 42px; border: 1px solid #e5e5e5; border-radius: 2px; background: #fff; color: #707070; line-height: 30px; text-align: center; }

.scrollbar { display: flex; flex-direction: column; justify-content: space-between; align-items: center; flex: none; width: 16px; padding: 5px 0; background: #f1f1f1; }
.sb-arrow { width: 9px; height: 6px; }

/* taskbar */
.taskbar { display: flex; flex: none; height: 40px; background: #0e0e1e; color: #fff; font-size: 11.500px; }
.tk-sys { display: flex; align-items: center; justify-content: center; flex: none; width: 48px; }
.tk-win { width: 16px; height: 16px; }
.tk-ico { width: 16px; height: 16px; }
.tk-app { position: relative; display: flex; align-items: center; justify-content: center; flex: none; width: 49px; padding-bottom: 2px; }
.tk-first { margin-left: 2px; }
.tk-app-ico { width: 24px; height: 24px; }
.tk-open::after { content: ""; position: absolute; left: 5px; right: 4px; bottom: 0; height: 2px; background: #f0949c; }
.tk-current { background: #3d3d4a; }
.tk-current::after { content: ""; position: absolute; left: 0; right: 1px; bottom: 0; height: 2px; background: #f0949c; }
.mail-badge { position: absolute; left: 29px; top: 18px; width: 17px; height: 17px; border-radius: 50%; background: #2a2a30; border: 1px solid #888; font-size: 11px; font-weight: 700; line-height: 15px; text-align: center; }
.epic { display: flex; flex-direction: column; align-items: center; width: 20px; height: 24px; background: #111; border-radius: 1px; font-weight: 700; line-height: 1; }
.epic span { display: block; font-size: 9.500px; line-height: 14px; letter-spacing: -.4px; transform: scaleY(1.3); }
.epic small { font-size: 4.500px; }
.tray { display: flex; align-items: center; flex: 1; padding-left: 443px; }
.tr-people { width: 16px; height: 16px; }
.tr-caret { width: 12px; height: 7px; margin-left: 21px; }
.tr-power { width: 16px; height: 13px; margin-left: 9px; }
.tr-net { width: 15px; height: 15px; margin-left: 10px; }
.tr-vol { width: 14px; height: 14px; margin-left: 7px; }
.tr-lang { margin-left: 12px; width: 26px; font-size: 12.500px; }
.tr-clock { display: flex; flex-direction: column; align-items: center; gap: 3px; width: 62px; margin-left: 11px; line-height: 16px; letter-spacing: -.3px; }
.tr-note { position: relative; margin-left: 16px; }
.tr-note-ico { width: 15px; height: 15px; }
.note-badge { position: absolute; left: 7px; top: 8px; width: 16px; height: 16px; border-radius: 50%; background: #2a2a30; border: 1px solid #777; font-size: 11px; font-weight: 700; line-height: 14px; text-align: center; }
```
